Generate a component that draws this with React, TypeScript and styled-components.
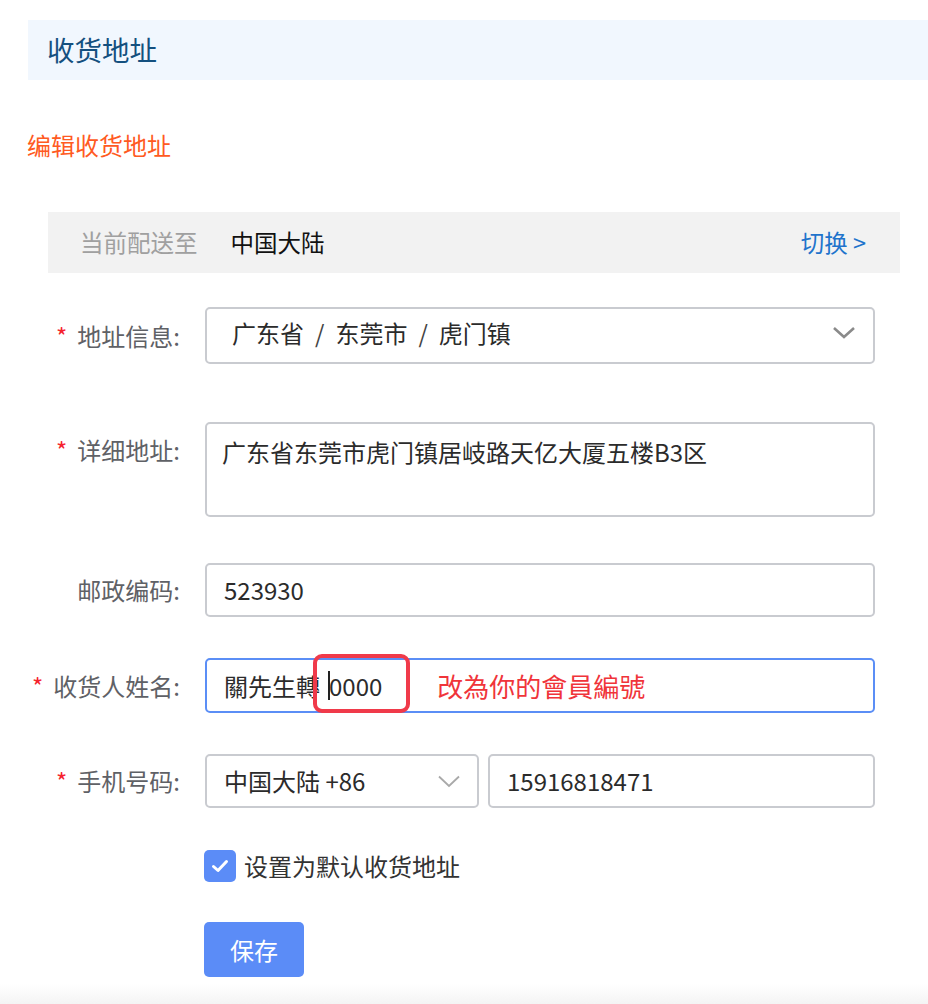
import React from "react";
import styled, { createGlobalStyle } from "styled-components";

const GlobalStyle = createGlobalStyle`
  html, body {
    margin: 0;
    padding: 0;
  }
  body {
    font-family: "Noto Sans CJK SC", "Noto Sans", "Liberation Sans", sans-serif;
    color: #333;
    min-height: 1004px;
    background: linear-gradient(to bottom, #ffffff 0, #ffffff 984px, #f4f4f4 1004px);
  }
`;

const Page = styled.div`
  padding: 20px 0 0 28px;
`;

const Header = styled.div`
  height: 60px;
  display: flex;
  align-items: center;
  padding-left: 19px;
  background: #f1f7fe;
  color: #14507f;
  font-size: 27.5px;
  line-height: 1;
`;

const EditTitle = styled.div`
  margin: 47px 0 0 -1px;
  font-size: 24px;
  line-height: 36px;
  color: #ff5a22;
`;

const Form = styled.div`
  margin: 49px 0 0 20px;
  width: 852px;
`;

const ShipBar = styled.div`
  height: 61px;
  display: flex;
  align-items: center;
  padding: 0 34px 0 32px;
  background: #f2f2f2;
  font-size: 23.5px;
  line-height: 1;
`;

const ShipLabel = styled.span`
  color: #a0a0a0;
`;

const ShipValue = styled.span`
  margin-left: 33px;
  color: #111;
`;

const SwitchLink = styled.span`
  margin-left: auto;
  color: #1f74cc;
`;

const Row = styled.div<{ $top: number; $alignTop?: boolean }>`
  display: grid;
  grid-template-columns: 132px 670px;
  column-gap: 25px;
  align-items: ${(p) => (p.$alignTop ? "start" : "center")};
  margin-top: ${(p) => p.$top}px;
`;

const Label = styled.div<{ $offset?: number }>`
  display: flex;
  justify-content: flex-end;
  min-width: 0;
  font-size: 24px;
  line-height: 36px;
  color: #5f6166;
  white-space: nowrap;
  padding-top: ${(p) => p.$offset ?? 0}px;
`;

const Star = styled.span`
  color: #f5222d;
  margin-right: 10px;
`;

const Box = styled.div<{ $height: number; $focused?: boolean; $pad?: number; $lift?: number }>`
  position: relative;
  box-sizing: border-box;
  height: ${(p) => p.$height}px;
  display: flex;
  align-items: center;
  padding: 0 17px ${(p) => p.$lift ?? 0}px ${(p) => p.$pad ?? 17}px;
  border: 2px solid ${(p) => (p.$focused ? "#5b8ef6" : "#c9cbd0")};
  border-radius: 5px;
  background: #fff;
  font-size: 24px;
  line-height: 36px;
  color: #2b2b2b;
`;

const AreaBox = styled(Box)`
  align-items: flex-start;
  padding-top: 10px;
`;

const Sep = styled.span`
  margin: 0 11px;
  color: #444;
`;

const Chevron = styled.svg`
  margin-left: auto;
  flex: none;
`;

const PhoneGroup = styled.div`
  display: grid;
  grid-template-columns: 274px 387px;
  column-gap: 9px;
`;

const Mark = styled.span`
  position: relative;
  display: inline-flex;
  align-items: center;
  margin-left: 8px;
  &::after {
    content: "";
    position: absolute;
    left: -15px;
    right: -28px;
    top: -14px;
    bottom: -9px;
    border: 4px solid #f03a4a;
    border-radius: 9px;
  }
`;

const Caret = styled.span`
  display: inline-block;
  width: 2px;
  height: 29px;
  background: #222;
  margin-right: -1px;
`;

const Note = styled.span`
  margin-left: 55px;
  font-size: 26px;
  color: #f0343a;
`;

const CheckRow = styled.div`
  display: flex;
  align-items: center;
  gap: 8px;
  margin: 42px 0 0 156px;
  font-size: 24px;
  line-height: 32px;
  color: #333;
`;

const CheckBox = styled.span`
  width: 32px;
  height: 32px;
  border-radius: 5px;
  background: #5b8cf7;
  display: flex;
  align-items: center;
  justify-content: center;
`;

const SaveButton = styled.button`
  display: block;
  margin: 40px 0 0 156px;
  width: 100px;
  height: 55px;
  border: none;
  border-radius: 5px;
  background: #5b8cf7;
  color: #fff;
  font-family: inherit;
  font-size: 24px;
  cursor: pointer;
`;

export default function App() {
  return (
    <>
      <GlobalStyle />
      <Page>
        <Header>收货地址</Header>
        <EditTitle>编辑收货地址</EditTitle>
        <Form>
          <ShipBar>
            <ShipLabel>当前配送至</ShipLabel>
            <ShipValue>中国大陆</ShipValue>
            <SwitchLink>切换 &gt;</SwitchLink>
          </ShipBar>

          <Row $top={34}>
            <Label>
              <Star>*</Star>地址信息:
            </Label>
            <Box $height={57} $pad={25} $lift={6}>
              广东省<Sep>/</Sep>东莞市<Sep>/</Sep>虎门镇
              <Chevron width="24" height="14" viewBox="0 0 24 14">
                <path d="M2 2 L12 11 L22 2" fill="none" stroke="#8a8a8a" strokeWidth="2.6" />
              </Chevron>
            </Box>
          </Row>

          <Row $top={58} $alignTop>
            <Label $offset={10}>
              <Star>*</Star>详细地址:
            </Label>
            <AreaBox $height={95} $pad={15}>
              广东省东莞市虎门镇居岐路天亿大厦五楼B3区
            </AreaBox>
          </Row>

          <Row $top={46}>
            <Label>邮政编码:</Label>
            <Box $height={54}>523930</Box>
          </Row>

          <Row $top={41}>
            <Label>
              <Star>*</Star>收货人姓名:
            </Label>
            <Box $height={55} $focused $pad={17}>
              關先生轉
              <Mark>
                <Caret />
                0000
              </Mark>
              <Note>改為你的會員編號</Note>
            </Box>
          </Row>

          <Row $top={41}>
            <Label>
              <Star>*</Star>手机号码:
            </Label>
            <PhoneGroup>
              <Box $height={54} $pad={17}>
                中国大陆 +86
                <Chevron width="22" height="13" viewBox="0 0 22 13">
                  <path d="M1 1.5 L11 11 L21 1.5" fill="none" stroke="#a9a9a9" strokeWidth="1.8" />
                </Chevron>
              </Box>
              <Box $height={54}>15916818471</Box>
            </PhoneGroup>
          </Row>

          <CheckRow>
            <CheckBox>
              <svg width="18" height="14" viewBox="0 0 18 14">
                <path d="M2.5 7.5 L7 11.5 L15.5 2.5" fill="none" stroke="#fff" strokeWidth="3" strokeLinecap="round" strokeLinejoin="round" />
              </svg>
            </CheckBox>
            设置为默认收货地址
          </CheckRow>

          <SaveButton>保存</SaveButton>
        </Form>
      </Page>
    </>
  );
}
